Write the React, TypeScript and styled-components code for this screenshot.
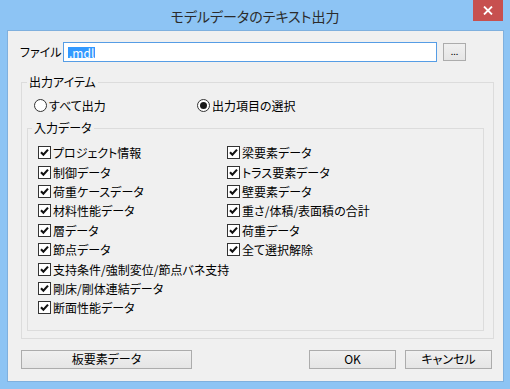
import React from 'react';
import styled, { createGlobalStyle } from 'styled-components';

const GlobalStyle = createGlobalStyle`
  html, body {
    margin: 0;
    padding: 0;
    background: #8cc3f2;
  }
  body {
    font-family: "Noto Sans CJK JP", "Noto Sans", sans-serif;
    font-feature-settings: "palt";
    font-size: 12px;
    color: #000;
  }
`;

const Frame = styled.div`
  width: 510px;
  height: 389px;
  background: #8dc4f4;
  display: flex;
  flex-direction: column;
  box-sizing: border-box;
`;

const TitleBar = styled.div`
  height: 30px;
  display: grid;
  grid-template-columns: 1fr auto 1fr;
  align-items: start;
`;

const Title = styled.span`
  grid-column: 2;
  font-size: 14px;
  line-height: 30px;
  color: #2b2b2b;
  padding-top: 1px;
`;

const CloseButton = styled.div`
  grid-column: 3;
  justify-self: end;
  margin-right: 7px;
  width: 30px;
  height: 21px;
  background: #c7504f;
  display: flex;
  align-items: center;
  justify-content: center;
`;

const Client = styled.div`
  margin: 0 6px 7px 7px;
  height: 352px;
  box-sizing: border-box;
  border: 1px solid #7fb0de;
  background: #f0f0f0;
  padding: 11px 0 0 12px;
  display: flex;
  flex-direction: column;
`;

const FileRow = styled.div`
  display: flex;
  align-items: center;
  height: 20px;
`;

const FieldLabel = styled.span`
  width: 43px;
  line-height: 20px;
`;

const FileInput = styled.div`
  width: 374px;
  height: 20px;
  box-sizing: border-box;
  border: 1px solid #569de5;
  background: #fff;
  display: flex;
  align-items: center;
  padding-left: 4px;
`;

const Selection = styled.span`
  background: #3399ff;
  color: #fff;
  line-height: 11px;
  height: 11px;
  padding: 0 1px;
  display: inline-flex;
  align-items: center;
`;

const Button = styled.div<{ $w: number; $h?: number }>`
  width: ${p => p.$w}px;
  height: ${p => p.$h ?? 19}px;
  box-sizing: border-box;
  border: 1px solid #acacac;
  background: linear-gradient(#f0f0f0, #e5e5e5);
  display: flex;
  align-items: center;
  justify-content: center;
  color: #000;
  line-height: 1;
`;

const SmallButton = styled(Button)`
  margin-left: 6px;
  font-size: 9px;
  padding-bottom: 2px;
`;

const GroupBox = styled.fieldset<{ $m: string }>`
  margin: ${p => p.$m};
  padding: 0;
  border: 1px solid #dcdcdc;
  min-inline-size: 0;
  box-sizing: border-box;
`;

const Legend = styled.legend<{ $ml: number }>`
  margin-left: ${p => p.$ml}px;
  padding: 0 2px;
  font-size: 12px;
  line-height: 14px;
`;

const RadioRow = styled.div`
  margin: 6px 0 0 12px;
  height: 20px;
  display: grid;
  grid-template-columns: 163px auto;
  align-items: center;
`;

const Option = styled.label`
  display: flex;
  align-items: center;
  gap: 2px;
  white-space: nowrap;
`;

const RadioCircle = styled.span<{ $on?: boolean }>`
  width: 13px;
  height: 13px;
  box-sizing: border-box;
  border-radius: 50%;
  border: 1px solid #333;
  background: #fff;
  display: flex;
  align-items: center;
  justify-content: center;
  &::after {
    content: '';
    display: ${p => (p.$on ? 'block' : 'none')};
    width: 7px;
    height: 7px;
    border-radius: 50%;
    background: #1a1a1a;
  }
`;

const CheckBox = styled.span`
  width: 13px;
  height: 13px;
  box-sizing: border-box;
  border: 1px solid #333;
  background: #fff;
  display: flex;
  align-items: center;
  justify-content: center;
  flex: none;
`;

const Columns = styled.div`
  padding: 8px 0 12px 10px;
  display: grid;
  grid-template-columns: 189px auto;
`;

const Column = styled.div`
  display: flex;
  flex-direction: column;
`;

const CheckRow = styled(Option)`
  height: 19.4px;
`;

const Footer = styled.div`
  margin: 11px 0 0 1px;
  width: 471px;
  display: flex;
  justify-content: space-between;
`;

const FooterRight = styled.div`
  display: flex;
  gap: 9px;
`;

const leftItems = [
  'プロジェクト情報',
  '制御データ',
  '荷重ケースデータ',
  '材料性能データ',
  '層データ',
  '節点データ',
  '支持条件/強制変位/節点バネ支持',
  '剛床/剛体連結データ',
  '断面性能データ',
];

const rightItems = [
  '梁要素データ',
  'トラス要素データ',
  '壁要素データ',
  '重さ/体積/表面積の合計',
  '荷重データ',
  '全て選択解除',
];

const Check = () => (
  <CheckBox>
    <svg width="9" height="9" viewBox="0 0 9 9">
      <polyline points="1,4.2 3.4,6.8 8,1.6" fill="none" stroke="#111" strokeWidth="2.1" />
    </svg>
  </CheckBox>
);

const CheckItem: React.FC<{ label: string }> = ({ label }) => (
  <CheckRow>
    <Check />
    <span>{label}</span>
  </CheckRow>
);

export default function App() {
  return (
    <>
      <GlobalStyle />
      <Frame>
        <TitleBar>
          <Title>モデルデータのテキスト出力</Title>
          <CloseButton>
            <svg width="10" height="9" viewBox="0 0 10 9">
              <path d="M1 0.5 L9 8.5 M9 0.5 L1 8.5" stroke="#fff" strokeWidth="1.8" />
            </svg>
          </CloseButton>
        </TitleBar>
        <Client>
          <FileRow>
            <FieldLabel>ファイル</FieldLabel>
            <FileInput>
              <Selection>.mdl</Selection>
            </FileInput>
            <SmallButton $w={23} $h={18}>...</SmallButton>
          </FileRow>
          <GroupBox $m="13px 0 0 1px" style={{ width: 473 }}>
            <Legend $ml={5}>出力アイテム</Legend>
            <RadioRow>
              <Option>
                <RadioCircle />
                <span>すべて出力</span>
              </Option>
              <Option>
                <RadioCircle $on />
                <span>出力項目の選択</span>
              </Option>
            </RadioRow>
            <GroupBox $m="6px 9px 7px 5px">
              <Legend $ml={4}>入力データ</Legend>
              <Columns>
                <Column>
                  {leftItems.map(t => (
                    <CheckItem key={t} label={t} />
                  ))}
                </Column>
                <Column>
                  {rightItems.map(t => (
                    <CheckItem key={t} label={t} />
                  ))}
                </Column>
              </Columns>
            </GroupBox>
          </GroupBox>
          <Footer>
            <Button $w={171}>板要素データ</Button>
            <FooterRight>
              <Button $w={87}>OK</Button>
              <Button $w={87}>キャンセル</Button>
            </FooterRight>
          </Footer>
        </Client>
      </Frame>
    </>
  );
}
